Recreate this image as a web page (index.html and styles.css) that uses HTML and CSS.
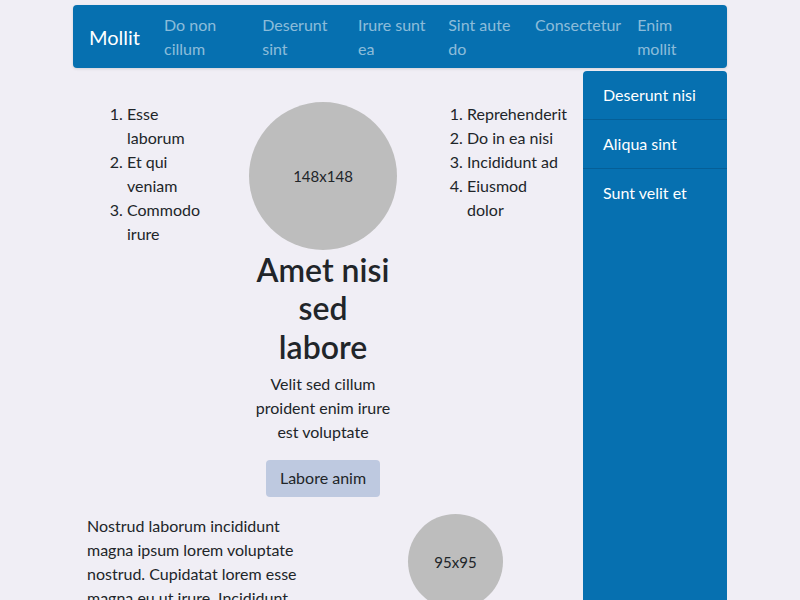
FILE: index.html
```html
<!DOCTYPE html>
<html lang="en">
<head>
<meta charset="utf-8">
<title>Mollit</title>
<link rel="stylesheet" href="styles.css">
</head>
<body>
<div class="page">
  <nav class="navbar">
    <a class="brand" href="#">Mollit</a>
    <ul class="nav">
      <li><a href="#">Do non cillum</a></li>
      <li><a href="#">Deserunt sint</a></li>
      <li><a href="#">Irure sunt ea</a></li>
      <li><a href="#">Sint aute do</a></li>
      <li><a href="#">Consectetur</a></li>
      <li><a href="#">Enim mollit</a></li>
    </ul>
  </nav>
  <div class="layout">
    <main class="main">
      <section class="top-row">
        <ol class="list list-left">
          <li>Esse laborum</li>
          <li>Et qui veniam</li>
          <li>Commodo irure</li>
        </ol>
        <div class="hero">
          <div class="circle circle-lg">148x148</div>
          <h2 class="hero-title">Amet nisi sed labore</h2>
          <p class="hero-text">Velit sed cillum proident enim irure est voluptate</p>
          <a class="btn" href="#">Labore anim</a>
        </div>
        <ol class="list list-right">
          <li>Reprehenderit</li>
          <li>Do in ea nisi</li>
          <li>Incididunt ad</li>
          <li>Eiusmod dolor</li>
        </ol>
      </section>
      <section class="bottom-row">
        <p class="body-text">Nostrud laborum incididunt magna ipsum lorem voluptate nostrud. Cupidatat lorem esse magna eu ut irure. Incididunt sint officia amet labore dolor.</p>
        <div class="media">
          <div class="circle circle-sm">95x95</div>
        </div>
      </section>
    </main>
    <aside class="sidebar">
      <a class="side-item" href="#">Deserunt nisi</a>
      <a class="side-item" href="#">Aliqua sint</a>
      <a class="side-item" href="#">Sunt velit et</a>
    </aside>
  </div>
</div>
</body>
</html>
```
FILE: styles.css
```css
* { box-sizing: border-box; }
html, body { height: 100%; }
body {
  margin: 0;
  background: #f0eef5;
  color: #212529;
  font-family: "Lato", "Liberation Sans", sans-serif;
  font-size: 16px;
  line-height: 24px;
  overflow: hidden;
}
a { text-decoration: none; }
.page {
  width: 654px;
  margin: 0 auto;
  padding-top: 5px;
}
.navbar {
  display: flex;
  align-items: center;
  background: #0670b0;
  border-radius: 4px;
  padding: 8px 16px 7px;
  box-shadow: 0 1px 3px rgba(0, 0, 0, 0.12);
}
.brand {
  color: #fff;
  font-size: 20px;
  line-height: 30px;
  margin-right: 16px;
  flex: none;
}
.nav {
  display: flex;
  list-style: none;
  margin: 0;
  padding: 0;
  flex: 0 1 555px;
}
.nav li { flex: 0 1 auto; }
.nav a {
  display: block;
  padding: 0 8px;
  color: rgba(255, 255, 255, 0.55);
}
.layout {
  display: flex;
  margin-top: 3px;
  align-items: stretch;
}
.main {
  flex: 1 1 auto;
  padding-top: 31px;
}
.sidebar {
  flex: 0 0 144px;
  background: #0670b0;
  border-radius: 4px 4px 0 0;
  min-height: 560px;
  display: flex;
  flex-direction: column;
}
.side-item {
  color: #fff;
  padding: 12px 20px;
  border-top: 1px solid #055f97;
}
.side-item:first-child { border-top: 0; }
.top-row {
  display: grid;
  grid-template-columns: 180px 140px 190px;
  align-items: start;
}
.list { margin: 0; }
.list-left { padding: 0 38px 0 54px; }
.list-right { padding: 0 15.6px 0 74px; }
.hero { text-align: center; }
.circle {
  display: flex;
  align-items: center;
  justify-content: center;
  border-radius: 50%;
  background: #bdbdbd;
  font-size: 15px;
  color: #212529;
}
.circle-lg { width: 148px; height: 148px; margin: 0 -4px; }
.circle-sm { width: 95px; height: 95px; }
.hero-title {
  margin: 1px 0 6px;
  font-size: 32px;
  line-height: 38.4px;
  font-weight: 600;
}
.hero-text { margin: 0 0 16px; }
.btn {
  display: inline-block;
  padding: 6px 14px 7px;
  border-radius: 4px;
  background: #bec9e0;
  color: #212529;
  margin-bottom: 17px;
}
.bottom-row {
  display: grid;
  grid-template-columns: 255px 255px;
}
.body-text { margin: 0; padding: 0 16px 0 14px; }
.media { display: flex; justify-content: center; }
```
